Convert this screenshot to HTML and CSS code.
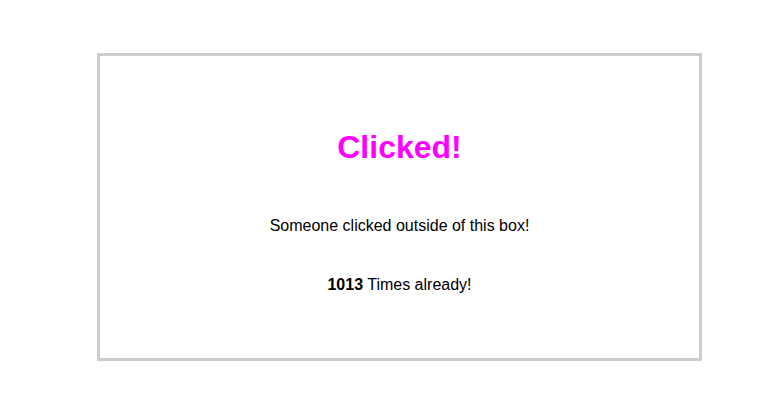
FILE: index.html
```html
<!DOCTYPE html>
<html>
<head>
<meta charset="utf-8">
<link rel="stylesheet" href="styles.css">
</head>
<body>
<div class="box">
  <h1 class="title">Clicked!</h1>
  <p class="msg">Someone clicked outside of this box!</p>
  <p class="count"><strong>1013</strong> Times already!</p>
</div>
</body>
</html>
```
FILE: styles.css
```css
html, body {
  margin: 0;
  padding: 0;
  background: #ffffff;
}
body {
  font-family: "Liberation Sans", Arial, sans-serif;
  color: #000000;
}
.box {
  box-sizing: border-box;
  width: 605px;
  margin: 53px 0 0 97px;
  border: 3px solid #cccccc;
  padding: 73px 0 64px;
  text-align: center;
}
.title {
  margin: 0 0 51px;
  font-size: 32px;
  font-weight: bold;
  color: #ff00ff;
  line-height: normal;
}
.msg {
  margin: 0 0 41px;
  font-size: 16px;
  line-height: normal;
}
.count {
  margin: 0;
  font-size: 16px;
  line-height: normal;
}
```
